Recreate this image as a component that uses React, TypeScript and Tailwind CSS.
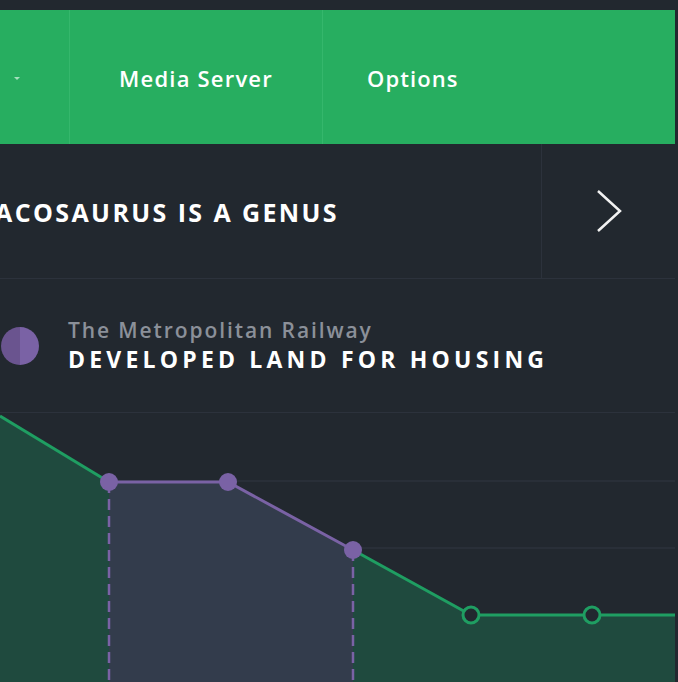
import React from "react";

const font = { fontFamily: "'Open Sans', 'Noto Sans', sans-serif" };

// chart points, in chart coords (chart top = page y 412)
const greenA = "M0,3 L109,69";
const purple = "M109,69 L228,69 L353,137";
const greenB = "M353,137 L471,202 L592,202 L675,202";

const Chart = () => {
  return (
    <svg width="678" height="270" viewBox="0 0 678 270" className="block">
      {[68, 135, 202].map((y) => (
        <line key={y} x1="0" x2="675" y1={y} y2={y} stroke="#2c323c" strokeWidth="1.5" />
      ))}
      <path d="M0,3 L109,69 L109,270 L0,270 Z" fill="#1f4a3e" />
      <path d="M109,69 L228,69 L353,137 L353,270 L109,270 Z" fill="#333c4c" />
      <path d="M353,137 L471,202 L675,202 L675,270 L353,270 Z" fill="#1f4a3e" />
      <path d={greenA} stroke="#1f9e62" strokeWidth="3" fill="none" />
      <path d={greenB} stroke="#1f9e62" strokeWidth="3" fill="none" />
      <path d={purple} stroke="#7a62a5" strokeWidth="3" fill="none" />
      <line x1="109" x2="109" y1="69" y2="270" stroke="#7a62a5" strokeWidth="2.5" strokeDasharray="11 6" />
      <line x1="353" x2="353" y1="137" y2="270" stroke="#7a62a5" strokeWidth="2.5" strokeDasharray="11 6" />
      {[
        [109, 69],
        [228, 69],
        [353, 137],
      ].map(([x, y]) => (
        <circle key={x} cx={x} cy={y} r="9" fill="#7a62a5" />
      ))}
      {[471, 592].map((x) => (
        <circle key={x} cx={x} cy="202" r="8" fill="#22282f" stroke="#1f9e62" strokeWidth="3" />
      ))}
    </svg>
  );
};

export default function App() {
  return (
    <div className="w-[678px] h-[682px] overflow-hidden bg-[#22282f] pt-[10px]" style={font}>
      <div className="w-[675px]">
        {/* nav */}
        <div className="flex h-[134px] bg-[#27ae60] text-white">
          <div className="w-[70px] border-r border-[#35b76c] flex items-center pl-[14px] pt-[3px]">
            <span className="block w-0 h-0 border-l-[3px] border-r-[3px] border-t-[3px] border-l-transparent border-r-transparent border-t-[#a6e0be]" />
          </div>
          <div className="w-[253px] border-r border-[#35b76c] flex items-center justify-center text-[22px] font-semibold tracking-[1.2px] pt-[3px]">
            Media Server
          </div>
          <div className="flex-1 flex items-center pl-[44px] text-[22px] font-semibold tracking-[1.1px] pt-[3px]">
            Options
          </div>
        </div>

        {/* title row */}
        <div className="flex h-[135px] border-b border-[#2c323c]">
          <div className="flex-1 flex items-center overflow-hidden">
            <span className="ml-[-5px] whitespace-nowrap text-white text-[25px] font-bold tracking-[2.4px] pt-[4px]">
              ACOSAURUS IS A GENUS
            </span>
          </div>
          <div className="w-[134px] border-l border-[#2c323c] flex items-center justify-center">
            <svg width="30" height="44" viewBox="0 0 30 44">
              <path d="M4,2 L26,22 L4,42" stroke="#f2f2f2" strokeWidth="2.5" fill="none" />
            </svg>
          </div>
        </div>

        {/* subtitle row */}
        <div className="flex h-[134px] items-center border-b border-[#2c323c]">
          <div className="w-[38px] h-[38px] rounded-full overflow-hidden flex ml-[1px] mr-[29px]">
            <div className="w-1/2 bg-[#6a548f]" />
            <div className="w-1/2 bg-[#7a62a5]" />
          </div>
          <div className="flex flex-col">
            <span className="text-[#8b9099] text-[21px] font-semibold tracking-[1.9px] leading-[26px]">
              The Metropolitan Railway
            </span>
            <span className="text-white text-[23px] font-bold tracking-[4.2px] leading-[32px]">
              DEVELOPED LAND FOR HOUSING
            </span>
          </div>
        </div>
      </div>
      <Chart />
    </div>
  );
}
